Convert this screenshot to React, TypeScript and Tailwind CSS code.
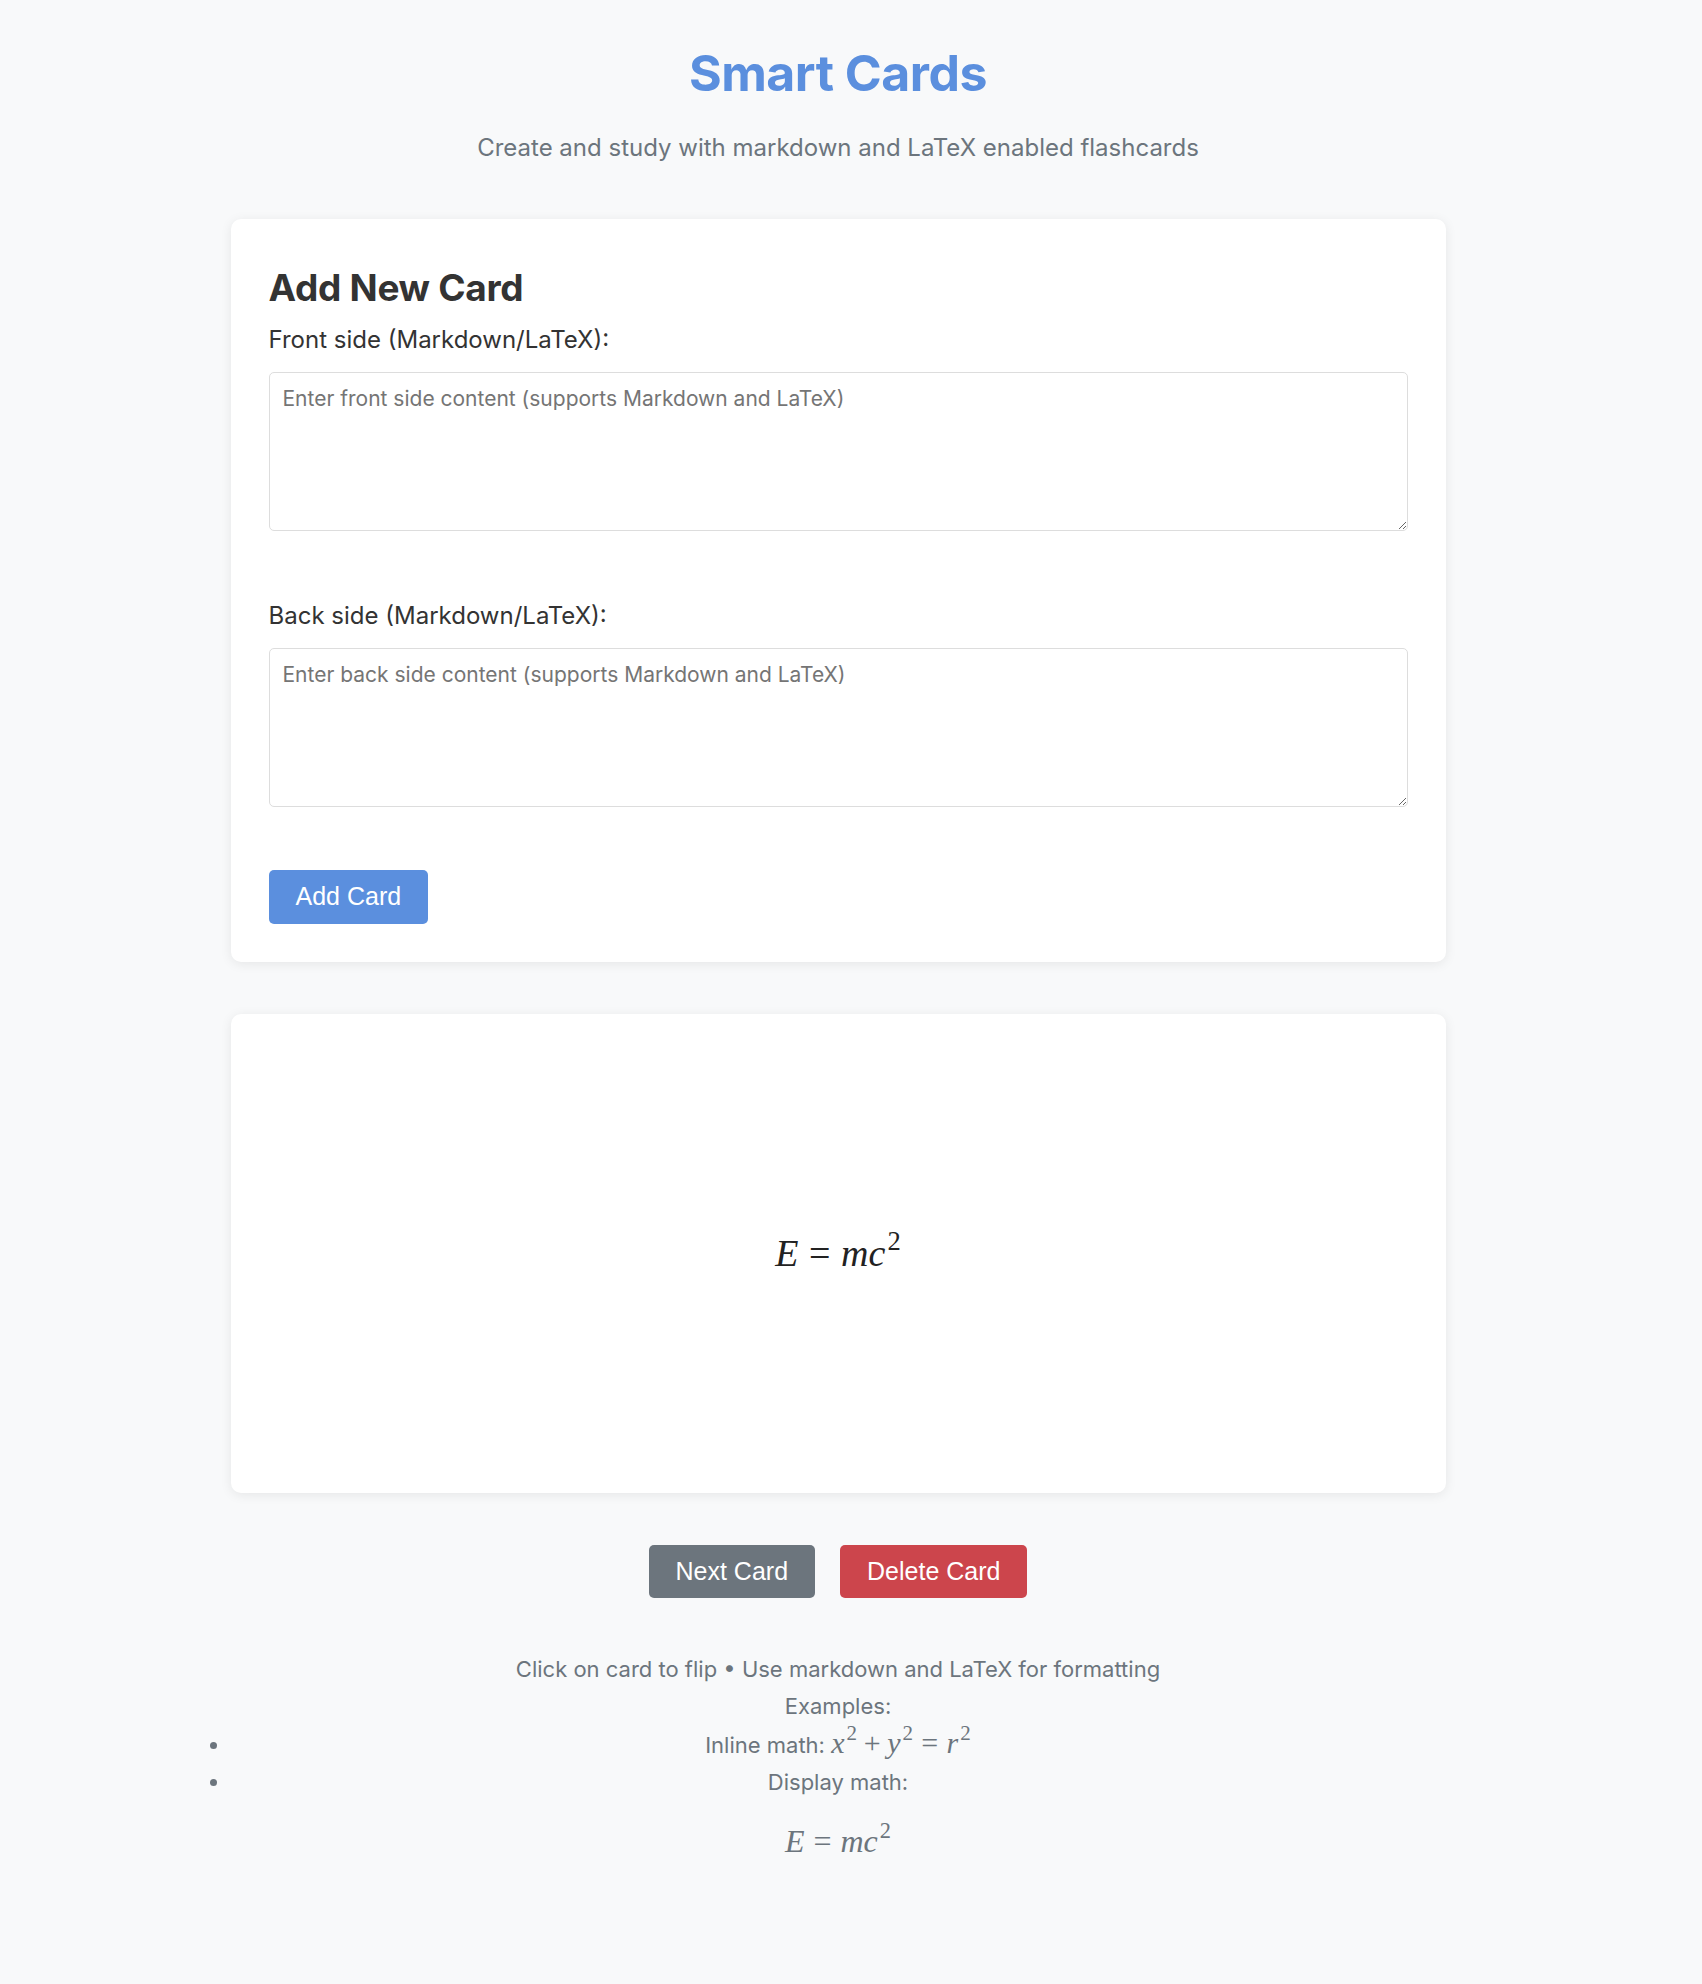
import React from 'react'

function Var({ children }: { children: React.ReactNode }) {
  return <i className="italic">{children}</i>
}

function Sq() {
  return <sup className="not-italic text-[0.7em] -top-[0.62em] ml-[2px]">2</sup>
}

function Rel({ children }: { children: React.ReactNode }) {
  return <span className="mx-[0.2778em] not-italic">{children}</span>
}

function Bin({ children }: { children: React.ReactNode }) {
  return <span className="mx-[0.2222em] not-italic">{children}</span>
}

function EmcSquared({ className }: { className?: string }) {
  return (
    <span className={"font-['Liberation_Serif',serif] whitespace-nowrap " + (className ?? '')}>
      <Var>E</Var>
      <Rel>=</Rel>
      <Var>m</Var>
      <Var>c</Var>
      <Sq />
    </span>
  )
}

function Field({ label, placeholder, className }: { label: string; placeholder: string; className?: string }) {
  return (
    <div className={className}>
      <label className="block text-[24px] leading-[30px] text-[#333]">{label}</label>
      <textarea
        placeholder={placeholder}
        className="mt-[17px] block w-full h-[159px] rounded-[5px] border border-[#ddd] bg-white px-[13px] py-[12px] text-[21px] leading-[28px] text-[#333] placeholder:text-[#757575] outline-none font-['Inter',sans-serif]"
      />
    </div>
  )
}

export default function App() {
  return (
    <div className="min-h-[1984px] bg-[#f8f9fa] font-['Inter',sans-serif]">
      <div className="w-[1676px] pt-[43px] pb-[80px]">
        <div className="mx-auto w-[1215px]">
          <h1 className="text-center text-[50px] leading-[60px] font-bold text-[#5b8fde] tracking-[-0.5px]">Smart Cards</h1>
          <p className="mt-[30px] text-center text-[24px] leading-[30px] text-[#6c757d]">
            Create and study with markdown and LaTeX enabled flashcards
          </p>

          <div className="mt-[56px] rounded-[10px] bg-white p-[38px] shadow-[0_2px_12px_rgba(0,0,0,0.08)]">
            <h2 className="mt-[10px] text-[37px] leading-[42px] font-bold text-[#333] tracking-[-0.3px]">Add New Card</h2>
            <Field
              className="mt-[16px]"
              label="Front side (Markdown/LaTeX):"
              placeholder="Enter front side content (supports Markdown and LaTeX)"
            />
            <Field
              className="mt-[70px]"
              label="Back side (Markdown/LaTeX):"
              placeholder="Enter back side content (supports Markdown and LaTeX)"
            />
            <button className="mt-[63px] h-[54px] rounded-[5px] bg-[#5b8fde] px-[27px] text-[25px] text-white font-['Liberation_Sans',sans-serif]">
              Add Card
            </button>
          </div>

          <div className="mt-[52px] flex h-[479px] items-center justify-center rounded-[10px] bg-white shadow-[0_2px_12px_rgba(0,0,0,0.08)] cursor-pointer">
            <EmcSquared className="text-[38px] text-[#222]" />
          </div>

          <div className="mt-[52px] flex justify-center gap-[25px]">
            <button className="h-[53px] rounded-[5px] bg-[#6c757d] px-[27px] text-[25px] text-white font-['Liberation_Sans',sans-serif]">
              Next Card
            </button>
            <button className="h-[53px] rounded-[5px] bg-[#cc454c] px-[27px] text-[25px] text-white font-['Liberation_Sans',sans-serif]">
              Delete Card
            </button>
          </div>

          <div className="mt-[53px] text-center text-[22px] leading-[36.5px] text-[#6c757d]">
            <p>Click on card to flip • Use markdown and LaTeX for formatting</p>
            <p>Examples:</p>
            <ul className="list-disc">
              <li className="leading-[38px]">
                Inline math:{' '}
                <span className="font-['Liberation_Serif',serif] text-[30px] whitespace-nowrap">
                  <Var>x</Var>
                  <Sq />
                  <Bin>+</Bin>
                  <Var>y</Var>
                  <Sq />
                  <Rel>=</Rel>
                  <Var>r</Var>
                  <Sq />
                </span>
              </li>
              <li>
                Display math:
                <div className="mt-[20px] leading-[40px]">
                  <EmcSquared className="text-[32px]" />
                </div>
              </li>
            </ul>
          </div>
        </div>
      </div>
    </div>
  )
}
